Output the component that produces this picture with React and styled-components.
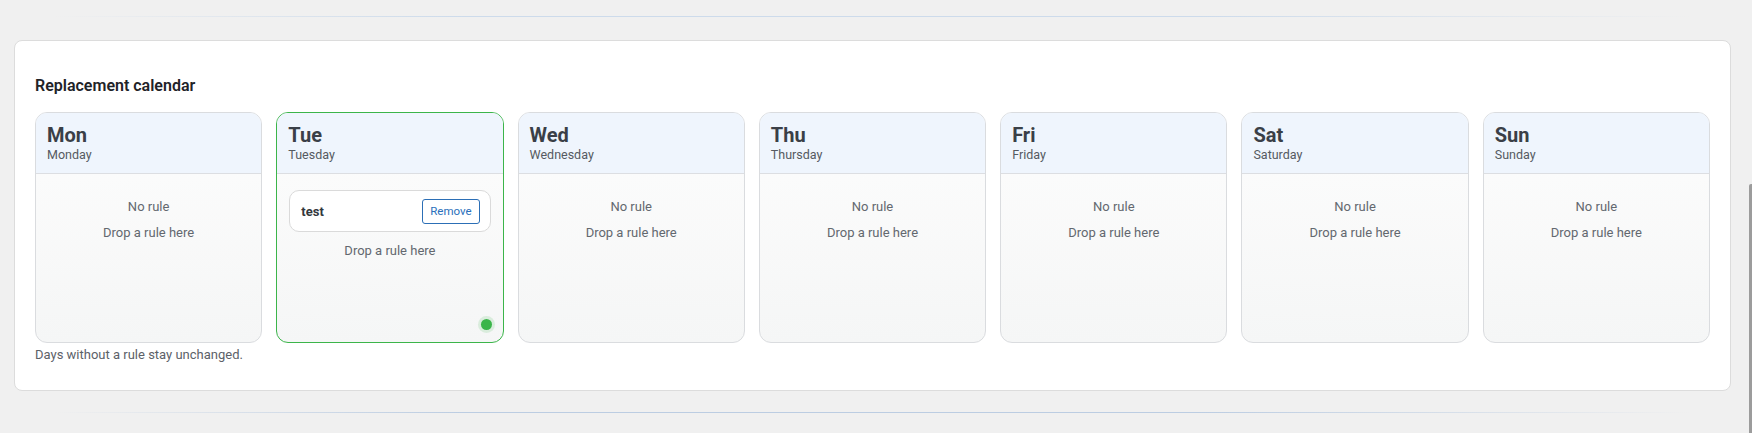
import React from 'react';
import styled, {createGlobalStyle} from 'styled-components';

const GlobalStyle = createGlobalStyle`
	html, body {
		margin: 0;
		padding: 0;
		background: #f0f0f0;
		font-family: Roboto, 'Liberation Sans', Arial, sans-serif;
		overflow: hidden;
	}
`;

const days = [
	{short: 'Mon', long: 'Monday', rules: []},
	{short: 'Tue', long: 'Tuesday', rules: ['test'], active: true},
	{short: 'Wed', long: 'Wednesday', rules: []},
	{short: 'Thu', long: 'Thursday', rules: []},
	{short: 'Fri', long: 'Friday', rules: []},
	{short: 'Sat', long: 'Saturday', rules: []},
	{short: 'Sun', long: 'Sunday', rules: []},
];

const DayColumn = ({day}) => {
	const {short, long, rules, active} = day;
	return (
		<DayCard $active={active}>
			<DayHeader>
				<DayShort>{short}</DayShort>
				<DayLong>{long}</DayLong>
			</DayHeader>
			<DayBody>
				{rules.length === 0 && <EmptyState>No rule</EmptyState>}
				{rules.map((rule) => {
					return (
						<RuleItem key={rule}>
							<RuleName>{rule}</RuleName>
							<RemoveButton type='button'>Remove</RemoveButton>
						</RuleItem>
					);
				})}
				<DropHint $afterRule={rules.length > 0}>Drop a rule here</DropHint>
			</DayBody>
			{active && <StatusDot />}
		</DayCard>
	);
};

const App = () => {
	return (
		<>
			<GlobalStyle />
			<Page>
				<Main>
					<FadeLine />
					<Panel>
						<Title>Replacement calendar</Title>
						<Week>
							{days.map((day) => {
								return <DayColumn key={day.short} day={day} />;
							})}
						</Week>
						<Note>Days without a rule stay unchanged.</Note>
					</Panel>
					<FadeLine $dark />
				</Main>
				<ScrollLane>
					<ScrollThumb />
				</ScrollLane>
			</Page>
		</>
	);
};

const Page = styled.div`
	display: flex;
	width: 1752px;
	height: 433px;
	overflow: hidden;
`;

const Main = styled.div`
	flex: 1;
	padding: 16px 14px 0;
	display: flex;
	flex-direction: column;
`;

const FadeLine = styled.div`
	height: 1px;
	margin: 0 40px;
	background: linear-gradient(
		90deg,
		rgba(200, 214, 232, 0) 0%,
		${(p) => (p.$dark ? '#bccde2' : '#cddbeb')} 25%,
		${(p) => (p.$dark ? '#bccde2' : '#cddbeb')} 70%,
		rgba(200, 214, 232, 0) 100%
	);
`;

const Panel = styled.section`
	margin: 23px 0 21px;
	background: #fff;
	border: 1px solid #dcdcdc;
	border-radius: 8px;
	padding: 35px 20px 26px;
`;

const Title = styled.h2`
	margin: 0 0 16px;
	font-size: 16px;
	line-height: 20px;
	font-weight: 600;
	color: #1f2328;
`;

const Week = styled.div`
	display: grid;
	grid-template-columns: repeat(7, 1fr);
	gap: 14px;
`;

const DayCard = styled.div`
	position: relative;
	height: 231px;
	box-sizing: border-box;
	display: flex;
	flex-direction: column;
	border: 1px solid ${(p) => (p.$active ? '#3cb54a' : '#dadcdf')};
	border-radius: 12px;
	overflow: hidden;
	background: linear-gradient(180deg, #fdfdfd 0%, #f5f6f6 100%);
`;

const DayHeader = styled.div`
	padding: 10px 11px;
	background: #eff5fd;
	border-bottom: 1px solid #dcdee2;
	display: flex;
	flex-direction: column;
`;

const DayShort = styled.span`
	font-size: 20px;
	line-height: 24px;
	font-weight: 700;
	color: #3a3f47;
`;

const DayLong = styled.span`
	font-size: 12.5px;
	line-height: 16px;
	color: #555a61;
`;

const DayBody = styled.div`
	flex: 1;
	padding: 16px 12px;
	display: flex;
	flex-direction: column;
	align-items: stretch;
`;

const EmptyState = styled.div`
	padding-top: 8px;
	text-align: center;
	font-size: 13px;
	line-height: 18px;
	color: #63686f;
`;

const DropHint = styled.div`
	margin-top: ${(p) => (p.$afterRule ? '10px' : '8px')};
	text-align: center;
	font-size: 13px;
	line-height: 18px;
	color: #63686f;
`;

const RuleItem = styled.div`
	display: flex;
	align-items: center;
	justify-content: space-between;
	height: 42px;
	box-sizing: border-box;
	padding: 0 10px 0 11px;
	background: #fff;
	border: 1px solid #dadada;
	border-radius: 10px;
`;

const RuleName = styled.span`
	font-size: 13px;
	font-weight: 700;
	color: #33373d;
`;

const RemoveButton = styled.button`
	height: 25px;
	padding: 0 7px;
	background: #fff;
	border: 1px solid #2c6fb6;
	border-radius: 3px;
	font-family: inherit;
	font-size: 11.5px;
	color: #2a70bb;
	cursor: pointer;
`;

const StatusDot = styled.span`
	position: absolute;
	right: 11px;
	bottom: 12px;
	width: 11px;
	height: 11px;
	border-radius: 50%;
	background: #3bb54a;
	box-shadow: 0 0 0 3px rgba(59, 181, 74, 0.15);
`;

const Note = styled.p`
	margin: 3px 0 0;
	font-size: 13px;
	line-height: 18px;
	color: #5c6168;
`;

const ScrollLane = styled.div`
	width: 7px;
	display: flex;
	justify-content: flex-end;
`;

const ScrollThumb = styled.div`
	width: 3px;
	height: 260px;
	margin-top: 184px;
	background: #9c9c9c;
	border-radius: 2px 0 0 2px;
`;

export default App;
